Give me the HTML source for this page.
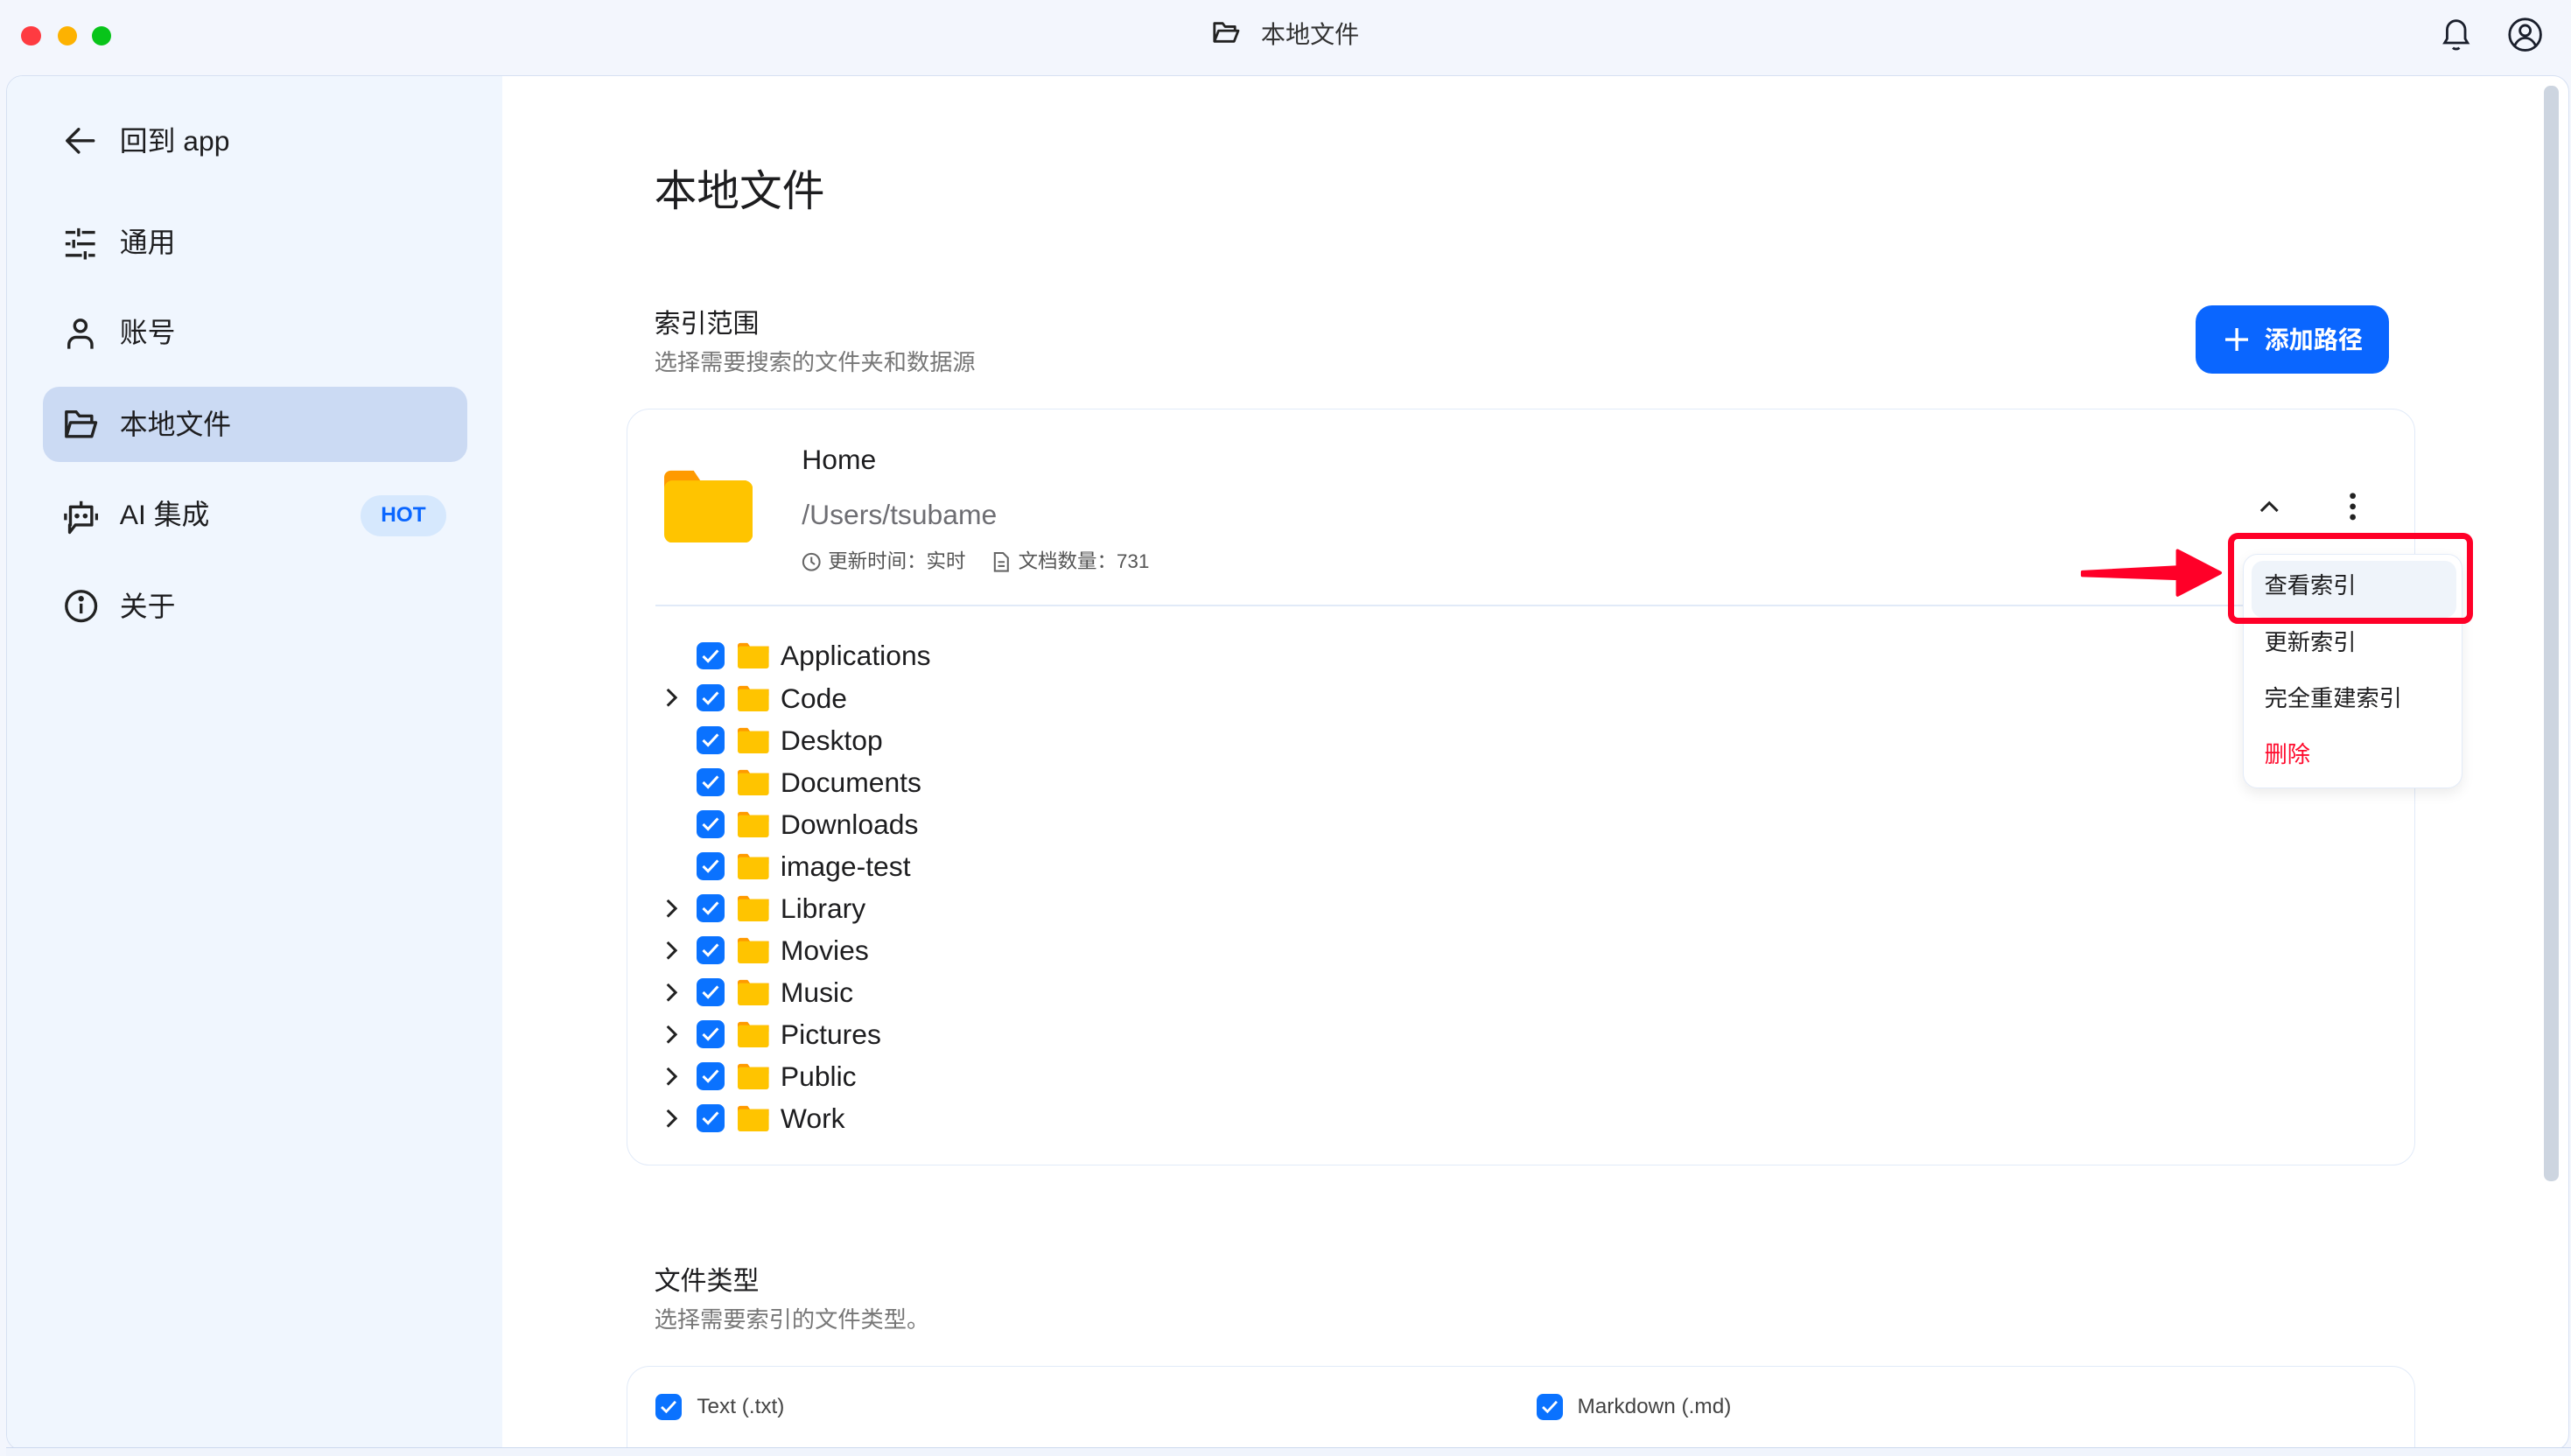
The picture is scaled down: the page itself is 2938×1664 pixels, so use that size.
<!DOCTYPE html>
<html><head><meta charset="utf-8">
<style>
html,body{margin:0;padding:0;width:2938px;height:1664px;overflow:hidden;background:#f3f6fd;}
#w{position:absolute;left:0;top:0;width:1568px;height:888px;overflow:hidden;zoom:1.8737;font-family:"Liberation Sans","Noto Sans CJK SC",sans-serif;color:#1d1d1f;}
.a{position:absolute;white-space:nowrap;}
.t{position:absolute;white-space:nowrap;line-height:1;margin-top:1px;}
.cb{position:absolute;width:17px;height:17px;border-radius:4px;background:#0a72ff;}
.cb svg{position:absolute;left:0;top:0}
.fd{position:absolute;width:19px;height:16px;}
</style></head><body><div id="w">
<div class="a" style="left:13px;top:16px;width:12px;height:12px;border-radius:6px;background:#fe3b41"></div>
<div class="a" style="left:35px;top:16px;width:12px;height:12px;border-radius:6px;background:#fdb201"></div>
<div class="a" style="left:56px;top:16px;width:12px;height:12px;border-radius:6px;background:#08c41a"></div>
<svg class="a" style="left:739px;top:12px" width="17" height="16" viewBox="0 0 17 16" fill="none" stroke="#222" stroke-width="1.5" stroke-linejoin="round"><path d="M1.5 13.5V2.5h5l1.5 2h6v2.5M1.5 13.5l2.5-6.5h12l-2.5 6.5z"/></svg>
<div class="t" style="left:769px;top:13px;font-size:15px;color:#333">本地文件</div>
<svg class="a" style="left:1488px;top:10px" width="20" height="22" viewBox="0 0 20 22" fill="none" stroke="#1a1f2c" stroke-width="1.5"><path d="M3 16h14l-1.5-2.5V8a5.5 5.5 0 0 0-11 0v5.5z"/><path d="M8 19c1 1 3 1 4 0"/></svg>
<svg class="a" style="left:1529px;top:10px" width="22" height="22" viewBox="0 0 22 22" fill="none" stroke="#1a1f2c" stroke-width="1.5"><circle cx="11" cy="11" r="9.5"/><circle cx="11" cy="8.5" r="3.2"/><path d="M4.5 18c1.5-3.5 4-5 6.5-5s5 1.5 6.5 5"/></svg>
<div class="a" style="left:4px;top:46px;width:1562px;height:838px;border:1px solid #d6e0f2;border-radius:10px;background:#fff;overflow:hidden">
 <div class="a" style="left:0;top:0;width:302px;height:838px;background:#f0f6fe"></div>
 <div class="a" style="left:1547px;top:6px;width:9px;height:668px;background:#cdd5e0;border-radius:4px"></div>
</div>
<svg class="a" style="left:39px;top:77px" width="20" height="18" viewBox="0 0 20 18" fill="none" stroke="#222" stroke-width="1.8" stroke-linecap="round" stroke-linejoin="round"><path d="M18 9H3M9 2L2 9l7 7"/></svg>
<div class="t" style="left:73px;top:77px;font-size:17px">回到 app</div>
<svg class="a" style="left:39px;top:139px" width="20" height="20" viewBox="0 0 20 20" fill="none" stroke="#222" stroke-width="1.8"><path d="M1 3h6M11 3h8M1 10h3M8 10h11M1 17h10M15 17h4M9 0.5v5M6 7.5v5M13 14.5v5"/></svg>
<div class="t" style="left:73px;top:139px;font-size:17px">通用</div>
<svg class="a" style="left:40px;top:194px" width="18" height="20" viewBox="0 0 18 20" fill="none" stroke="#222" stroke-width="1.8"><circle cx="9" cy="5" r="3.5"/><path d="M2 19v-2.5c0-2.5 2-4.5 4.5-4.5h5c2.5 0 4.5 2 4.5 4.5V19"/></svg>
<div class="t" style="left:73px;top:194px;font-size:17px">账号</div>
<div class="a" style="left:26px;top:236px;width:259px;height:46px;border-radius:10px;background:#cbdaf3"></div>
<svg class="a" style="left:39px;top:249px" width="21" height="19" viewBox="0 0 21 19" fill="none" stroke="#222" stroke-width="1.8" stroke-linejoin="round"><path d="M1.5 17V2h6l2 2.5h7.5V8M1.5 17l2.5-8.5h15.5L17 17z"/></svg>
<div class="t" style="left:73px;top:250px;font-size:17px">本地文件</div>
<svg class="a" style="left:39px;top:304px" width="21" height="22" viewBox="0 0 21 22" fill="none" stroke="#222" stroke-width="1.8" stroke-linejoin="round"><path d="M10.5 1.5v3.5M4 5h13v11H7l-3.5 4.5V16H4zM1 9v4M20 9v4"/><circle cx="8" cy="10.5" r=".6" fill="#222"/><circle cx="13" cy="10.5" r=".6" fill="#222"/></svg>
<div class="t" style="left:73px;top:305px;font-size:17px">AI 集成</div>
<div class="a" style="left:220px;top:302px;width:52px;height:25px;border-radius:13px;background:#d6e8fd;color:#0a66ff;font-size:13px;font-weight:bold;text-align:center;line-height:25px">HOT</div>
<svg class="a" style="left:39px;top:359px" width="21" height="21" viewBox="0 0 21 21" fill="none" stroke="#222" stroke-width="1.8"><circle cx="10.5" cy="10.5" r="9"/><path d="M10.5 9v6"/><circle cx="10.5" cy="6" r=".8" fill="#222"/></svg>
<div class="t" style="left:73px;top:361px;font-size:17px">关于</div>
<div class="t" style="left:399px;top:103px;font-size:26px">本地文件</div>
<div class="t" style="left:399px;top:189px;font-size:16px">索引范围</div>
<div class="t" style="left:399px;top:213px;font-size:14px;color:#777">选择需要搜索的文件夹和数据源</div>
<div class="a" style="left:1339px;top:186px;width:118px;height:42px;border-radius:10px;background:#0a66ff"></div>
<svg class="a" style="left:1357px;top:200px" width="14" height="14" viewBox="0 0 14 14" stroke="#fff" stroke-width="1.8"><path d="M7 0v14M0 7h14"/></svg>
<div class="t" style="left:1381px;top:199px;font-size:15px;color:#fff;font-weight:bold">添加路径</div>
<div class="a" style="left:382px;top:249px;width:1090px;height:461px;border:1px solid #e1eaf8;border-radius:14px"></div>
<svg class="a" style="left:405px;top:286px" width="54" height="45" viewBox="0 0 54 45"><path d="M0 5a4 4 0 0 1 4-4h14l4 6H50v10H0z" fill="#ff9a00"/><rect x="0" y="7" width="54" height="38" rx="5" fill="#ffc400"/></svg>
<div class="t" style="left:489px;top:271px;font-size:17px">Home</div>
<div class="t" style="left:489px;top:305px;font-size:17px;color:#6e6e73">/Users/tsubame</div>
<svg class="a" style="left:489px;top:337px" width="12" height="12" viewBox="0 0 12 12" fill="none" stroke="#666" stroke-width="1.1"><circle cx="6" cy="6" r="5"/><path d="M6 3v3l2 1.5"/></svg>
<div class="t" style="left:505px;top:336px;font-size:12px;color:#555">更新时间：实时</div>
<svg class="a" style="left:605px;top:337px" width="11" height="12" viewBox="0 0 11 12" fill="none" stroke="#666" stroke-width="1.1"><path d="M1.5.5h5l3 3v8h-8zM3.5 6h4M3.5 8.5h4"/></svg>
<div class="t" style="left:621px;top:336px;font-size:12px;color:#555">文档数量：731</div>
<div class="a" style="left:400px;top:369px;width:1056px;height:1px;background:#e1eaf8"></div>
<svg class="a" style="left:1378px;top:305px" width="12" height="8" viewBox="0 0 12 8" fill="none" stroke="#222" stroke-width="1.6"><path d="M1 7l5-5 5 5"/></svg>
<svg class="a" style="left:1432px;top:300px" width="6" height="18" viewBox="0 0 6 18" fill="#222"><circle cx="3" cy="2.5" r="1.8"/><circle cx="3" cy="9" r="1.8"/><circle cx="3" cy="15.5" r="1.8"/></svg>
<div id="tree"></div>
<div class="a" style="left:1368px;top:338px;width:133px;height:142px;border:1px solid #e3ebf8;border-radius:9px;background:#fff;box-shadow:0 3px 8px rgba(0,0,0,.08)"></div>
<div class="a" style="left:1373px;top:342px;width:125px;height:35px;border-radius:7px;background:#eff4fa"></div>
<div class="t" style="left:1381px;top:349px;font-size:14px">查看索引</div>
<div class="t" style="left:1381px;top:384px;font-size:14px">更新索引</div>
<div class="t" style="left:1381px;top:418px;font-size:14px">完全重建索引</div>
<div class="t" style="left:1381px;top:452px;font-size:14px;color:#ff0a2c">删除</div>
<div class="a" style="left:1359px;top:325px;width:142px;height:48px;border:4px solid #ff0028;border-radius:6px"></div>
<svg class="a" style="left:1268px;top:331px" width="90" height="38" viewBox="0 0 90 38"><path d="M2 18L60 15V5L86 18.5 60 32V22L2 20z" fill="#ff0028" stroke="#ff0028" stroke-width="2" stroke-linejoin="round"/></svg>
<div class="t" style="left:399px;top:773px;font-size:16px">文件类型</div>
<div class="t" style="left:399px;top:797px;font-size:14px;color:#777">选择需要索引的文件类型。</div>
<div class="a" style="left:382px;top:833px;width:1090px;height:49px;border:1px solid #e1eaf8;border-bottom:none;border-radius:14px 14px 0 0"></div>
<div class="cb" style="left:400px;top:850px;width:16px;height:16px"><svg width="16" height="16" viewBox="0 0 17 17" fill="none" stroke="#fff" stroke-width="1.6"><path d="M4 8.5l3 3 6-6.5"/></svg></div>
<div class="t" style="left:425px;top:851px;font-size:13px;color:#444">Text (.txt)</div>
<div class="cb" style="left:937px;top:850px;width:16px;height:16px"><svg width="16" height="16" viewBox="0 0 17 17" fill="none" stroke="#fff" stroke-width="1.6"><path d="M4 8.5l3 3 6-6.5"/></svg></div>
<div class="t" style="left:962px;top:851px;font-size:13px;color:#444">Markdown (.md)</div>
<div class="a" style="left:4px;top:883px;width:1564px;height:5px;background:#f0f4fc;border-top:1px solid #cdd9ef"></div>
</div>
<script>
var rows=[["Applications",0],["Code",1],["Desktop",0],["Documents",0],["Downloads",0],["image-test",0],["Library",1],["Movies",1],["Music",1],["Pictures",1],["Public",1],["Work",1]];
var h="";
rows.forEach(function(r,i){var y=400+i*25.65;
if(r[1])h+='<svg class="a" style="left:405px;top:'+(y-6)+'px" width="8" height="12" viewBox="0 0 8 12" fill="none" stroke="#222" stroke-width="1.6"><path d="M2 1l5 5-5 5"/></svg>';
h+='<div class="cb" style="left:425px;top:'+(y-8.5)+'px"><svg width="17" height="17" viewBox="0 0 17 17" fill="none" stroke="#fff" stroke-width="1.6"><path d="M4 8.5l3 3 6-6.5"/></svg></div>';
h+='<svg class="fd" style="left:450px;top:'+(y-8)+'px" viewBox="0 0 19 16"><path d="M0 2a1.5 1.5 0 0 1 1.5-1.5h4.5l1.5 2H19v4H0z" fill="#ff9a00"/><rect x="0" y="2.5" width="19" height="13.5" rx="1.5" fill="#ffc400"/></svg>';
h+='<div class="t" style="left:476px;top:'+(y-9)+'px;font-size:17px">'+r[0]+'</div>';});
document.getElementById("tree").outerHTML=h;
</script>
</body></html>
